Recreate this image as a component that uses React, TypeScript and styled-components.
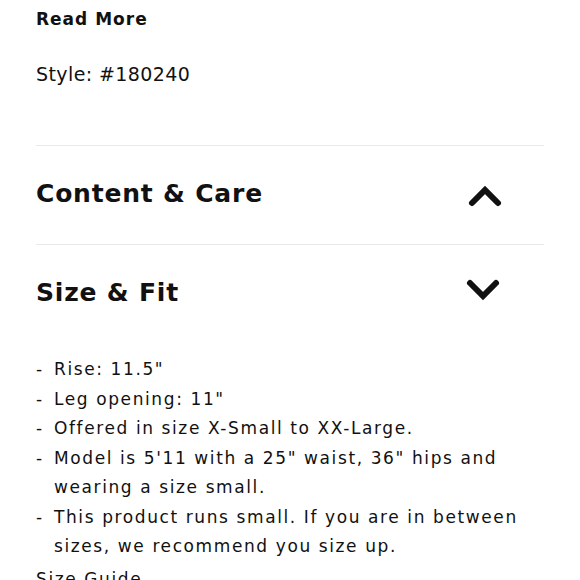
import React from "react";
import styled, { createGlobalStyle } from "styled-components";

const GlobalStyle = createGlobalStyle`
  body {
    margin: 0;
    background: #fff;
    font-family: "DejaVu Sans", "Noto Sans", sans-serif;
    color: #111;
  }
`;

const Page = styled.div`
  padding: 0 36px;
  overflow: hidden;
  height: 580px;
`;

const ReadMore = styled.div`
  font-size: 17px;
  font-weight: 700;
  letter-spacing: 1px;
  line-height: 20px;
  padding-top: 9px;
`;

const StyleCode = styled.div`
  font-size: 19px;
  line-height: 24px;
  letter-spacing: 0.4px;
  margin-top: 33px;
  padding-bottom: 59px;
  border-bottom: 1px solid #e9e9e9;
`;

const Section = styled.div<{ $last?: boolean }>`
  border-bottom: ${(p) => (p.$last ? "none" : "1px solid #e9e9e9")};
`;

const Header = styled.div`
  height: 98px;
  display: flex;
  align-items: center;
  justify-content: space-between;
`;

const Title = styled.h2`
  margin: 0 0 3px;
  font-size: 25px;
  font-weight: 700;
  letter-spacing: 0.8px;
`;

const Chevron = styled.svg<{ $shift: number; $dy: number }>`
  width: 36px;
  height: 24px;
  margin-right: ${(p) => p.$shift}px;
  transform: translateY(${(p) => p.$dy}px);
`;

const List = styled.ul`
  list-style: none;
  margin: 0;
  padding: 12px 0 0;
`;

const Item = styled.li`
  display: flex;
  font-size: 17px;
  line-height: 29.5px;
  letter-spacing: 1.6px;
`;

const Dash = styled.span`
  width: 18px;
  flex: none;
`;

const Guide = styled.div`
  font-size: 17px;
  letter-spacing: 1.6px;
  line-height: 29.5px;
  margin-top: 3px;
`;

function ChevronIcon({ up, shift, dy }: { up: boolean; shift: number; dy: number }) {
  return (
    <Chevron viewBox="0 0 36 24" $shift={shift} $dy={dy}>
      <path
        d={up ? "M5 19 L18 6 L31 19" : "M5 5 L18 18 L31 5"}
        fill="none"
        stroke="#111"
        strokeWidth="6"
        strokeLinecap="round"
        strokeLinejoin="miter"
      />
    </Chevron>
  );
}

const items = [
  'Rise: 11.5"',
  'Leg opening: 11"',
  "Offered in size X-Small to XX-Large.",
  'Model is 5\'11 with a 25" waist, 36" hips and wearing a size small.',
  "This product runs small. If you are in between sizes, we recommend you size up.",
];

export default function App() {
  return (
    <Page>
      <GlobalStyle />
      <ReadMore>Read More</ReadMore>
      <StyleCode>Style: #180240</StyleCode>
      <Section>
        <Header>
          <Title>Content &amp; Care</Title>
          <ChevronIcon up shift={41} dy={1} />
        </Header>
      </Section>
      <Section $last>
        <Header>
          <Title>Size &amp; Fit</Title>
          <ChevronIcon up={false} shift={43} dy={-4} />
        </Header>
        <List>
          {items.map((t) => (
            <Item key={t}>
              <Dash>-</Dash>
              <span>{t}</span>
            </Item>
          ))}
        </List>
        <Guide>Size Guide</Guide>
      </Section>
    </Page>
  );
}
